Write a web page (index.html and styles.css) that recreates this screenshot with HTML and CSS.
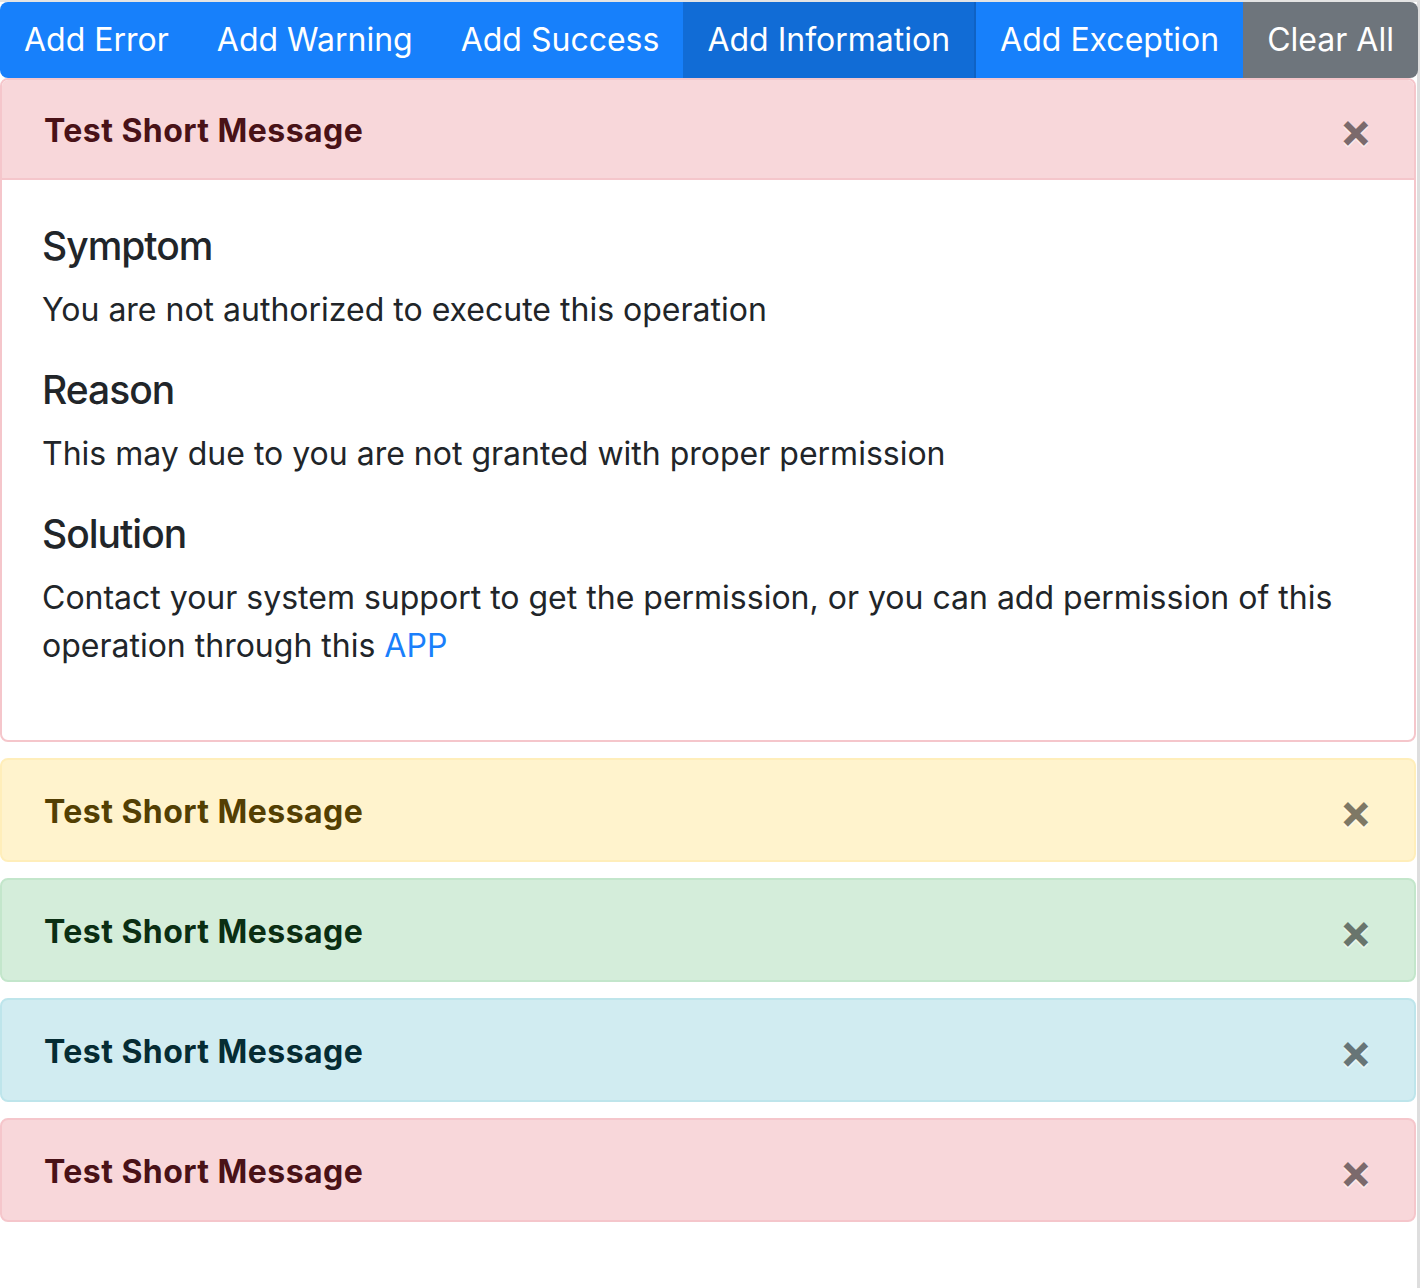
FILE: index.html
```html
<!DOCTYPE html>
<html lang="en">

<head>
    <meta charset="UTF-8">
    <meta name="viewport" content="width=device-width, initial-scale=1.0">
    <title>Messages</title>
    <link rel="stylesheet" href="styles.css">
</head>

<body>
    <div class="frame">
        <div class="page">
            <div class="btn-group">
                <button class="btn btn-primary">Add Error</button>
                <button class="btn btn-primary">Add Warning</button>
                <button class="btn btn-primary">Add Success</button>
                <button class="btn btn-primary active">Add Information</button>
                <button class="btn btn-primary">Add Exception</button>
                <button class="btn btn-secondary">Clear All</button>
            </div>

            <!-- foldet ud fejlbesked med detaljer -->
            <div class="alert-card alert-danger">
                <div class="alert-head">
                    <a class="alert-link">Test Short Message</a>
                    <button class="close">&times;</button>
                </div>
                <div class="alert-body">
                    <h5>Symptom</h5>
                    <p>You are not authorized to execute this operation</p>
                    <h5>Reason</h5>
                    <p>This may due to you are not granted with proper permission</p>
                    <h5>Solution</h5>
                    <p>Contact your system support to get the permission, or you can add permission of this operation through this <a href="#" class="link">APP</a></p>
                </div>
            </div>

            <div class="alert alert-warning">
                <a class="alert-link">Test Short Message</a>
                <button class="close">&times;</button>
            </div>
            <div class="alert alert-success">
                <a class="alert-link">Test Short Message</a>
                <button class="close">&times;</button>
            </div>
            <div class="alert alert-info">
                <a class="alert-link">Test Short Message</a>
                <button class="close">&times;</button>
            </div>
            <div class="alert alert-danger">
                <a class="alert-link">Test Short Message</a>
                <button class="close">&times;</button>
            </div>
        </div>
    </div>
</body>

</html>
```

FILE: styles.css
```css
/* nulstil */
* {
    margin: 0;
    padding: 0;
    box-sizing: border-box;
}

body {
    font-family: Inter, "Liberation Sans", sans-serif;
    color: #212529;
    background-color: white;
    height: 1288px;
}

.frame {
    width: 1420px;
    height: 100%;
    border-top: 2px solid #e4e4e4;
    border-right: 3px solid #dedede;
}

.page {
    width: 1416px;
}

/* knapperne foroven */
.btn-group {
    display: flex;
    height: 76px;
}

.btn {
    flex: 1 1 auto;
    padding: 0 24px;
    font-family: inherit;
    font-size: 32px;
    line-height: 76px;
    color: white;
    border: none;
    cursor: pointer;
    white-space: nowrap;
}

.btn:first-child {
    border-radius: 8px 0 0 8px;
}

.btn:last-child {
    border-radius: 0 8px 8px 0;
}

.btn-primary {
    background-color: #1780fb;
}

.btn-primary.active {
    background-color: #116cd6;
    border-right: 2px solid #0f62c4;
}

.btn-secondary {
    background-color: #6e757c;
}

/* beskeder */
.alert,
.alert-card {
    border: 2px solid;
    border-radius: 8px;
}

.alert {
    display: flex;
    justify-content: space-between;
    align-items: center;
    padding: 26px 40px 26px 42px;
    margin-top: 16px;
}

.alert-head {
    display: flex;
    justify-content: space-between;
    align-items: center;
    padding: 25px 40px 25px 42px;
    border-bottom: 2px solid #f5c6cb;
    border-radius: 6px 6px 0 0;
}

.alert-link {
    padding-top: 4px;
    font-size: 32px;
    line-height: 44px;
    font-weight: 700;
    letter-spacing: 0.45px;
}

.close {
    height: 48px;
    padding-top: 1px;
    background: none;
    border: none;
    font-family: inherit;
    font-size: 48px;
    line-height: 1;
    font-weight: 700;
    color: black;
    opacity: 0.5;
    text-shadow: 0 2px 0 white;
    margin-right: 2px;
}

.alert-danger {
    background-color: #f8d7da;
    border-color: #f5c6cb;
}

.alert-danger .alert-link {
    color: #491217;
}

.alert-card.alert-danger {
    background-color: white;
}

.alert-card .alert-head {
    background-color: #f8d7da;
}

.alert-warning {
    background-color: #fff3cd;
    border-color: #ffeeba;
}

.alert-warning .alert-link {
    color: #533f03;
}

.alert-success {
    background-color: #d4edda;
    border-color: #c3e6cb;
}

.alert-success .alert-link {
    color: #0b2e13;
}

.alert-info {
    background-color: #d1ecf1;
    border-color: #bee5eb;
}

.alert-info .alert-link {
    color: #062c33;
}

.alert-body {
    padding: 42px 40px 38px;
}

.alert-body h5 {
    font-size: 39px;
    line-height: 48px;
    font-weight: 500;
    letter-spacing: -1px;
    margin-bottom: 16px;
}

.alert-body p {
    font-size: 32px;
    line-height: 48px;
    margin-bottom: 32px;
}

.link {
    color: #1a7ffb;
    text-decoration: none;
}
```
